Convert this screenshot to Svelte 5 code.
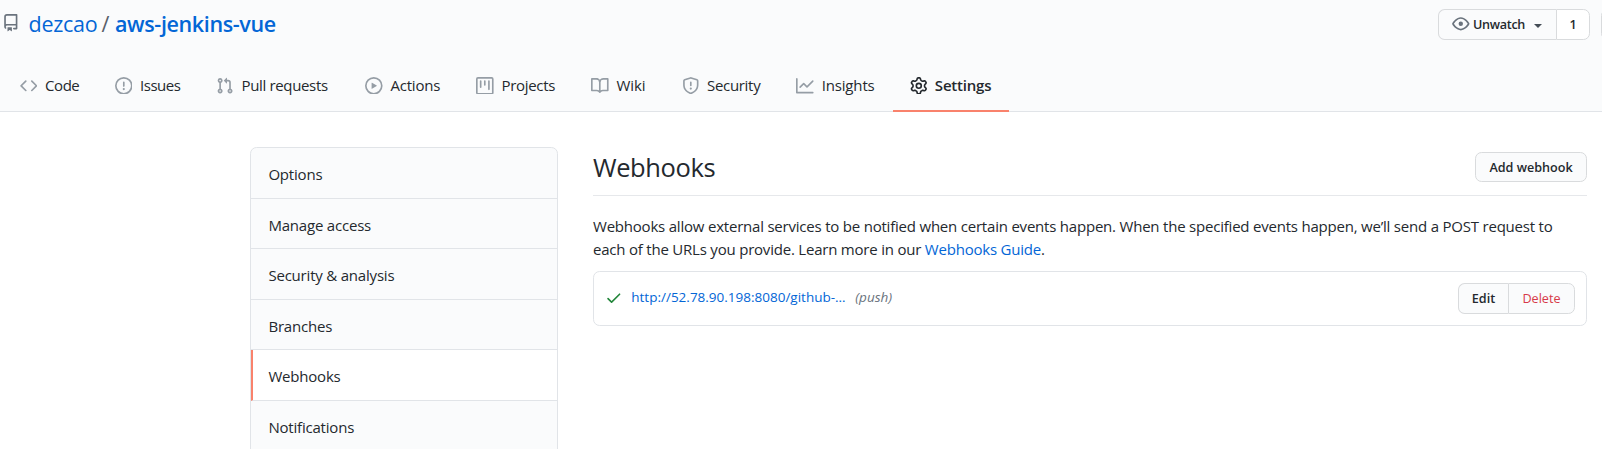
<script>
  const tabs = [
    { label: 'Code', icon: 'code', ls: -0.45 },
    { label: 'Issues', icon: 'issue', ls: -0.5 },
    { label: 'Pull requests', icon: 'pr', ls: -0.34 },
    { label: 'Actions', icon: 'play', ls: -0.2 },
    { label: 'Projects', icon: 'project', ls: -0.3 },
    { label: 'Wiki', icon: 'book', ls: -0.1 },
    { label: 'Security', icon: 'shield', ls: -0.3 },
    { label: 'Insights', icon: 'graph', ls: -0.15 },
    { label: 'Settings', icon: 'gear', ls: -0.2, active: true },
  ];
  const menu = ['Options', 'Manage access', 'Security & analysis', 'Branches', 'Webhooks', 'Notifications'];
  const paths = {
    repo: 'M2 2.5A2.5 2.5 0 014.5 0h8.75a.75.75 0 01.75.75v12.5a.75.75 0 01-.75.75h-2.5a.75.75 0 110-1.5h1.75v-2h-8a1 1 0 00-.714 1.7.75.75 0 01-1.072 1.05A2.495 2.495 0 012 11.5v-9zm10.5-1V9h-8c-.356 0-.694.074-1 .208V2.5a1 1 0 011-1h8zM5 12.25v3.25a.25.25 0 00.4.2l1.45-1.087a.25.25 0 01.3 0L8.6 15.7a.25.25 0 00.4-.2v-3.25a.25.25 0 00-.25-.25h-3.5a.25.25 0 00-.25.25z',
    code: 'M4.72 3.22a.75.75 0 011.06 1.06L2.06 8l3.72 3.72a.75.75 0 11-1.06 1.06L.47 8.53a.75.75 0 010-1.06l4.25-4.25zm6.56 0a.75.75 0 10-1.06 1.06L13.94 8l-3.72 3.72a.75.75 0 101.06 1.06l4.25-4.25a.75.75 0 000-1.06l-4.25-4.25z',
    issue: 'M8 1.5a6.5 6.5 0 100 13 6.5 6.5 0 000-13zM0 8a8 8 0 1116 0A8 8 0 010 8zm9 3a1 1 0 11-2 0 1 1 0 012 0zm-.25-6.25a.75.75 0 00-1.5 0v3.5a.75.75 0 001.5 0v-3.5z',
    pr: 'M7.177 3.073L9.573.677A.25.25 0 0110 .854v4.792a.25.25 0 01-.427.177L7.177 3.427a.25.25 0 010-.354zM3.75 2.5a.75.75 0 100 1.5.75.75 0 000-1.5zm-2.25.75a2.25 2.25 0 113 2.122v5.256a2.251 2.251 0 11-1.5 0V5.372A2.25 2.25 0 011.5 3.25zM11 2.5h-1V4h1a1 1 0 011 1v5.628a2.251 2.251 0 101.5 0V5A2.5 2.5 0 0011 2.5zm1 10.25a.75.75 0 111.5 0 .75.75 0 01-1.5 0zM3.75 12a.75.75 0 100 1.5.75.75 0 000-1.5z',
    play: 'M1.5 8a6.5 6.5 0 1113 0 6.5 6.5 0 01-13 0zM8 0a8 8 0 100 16A8 8 0 008 0zM6.379 5.227A.25.25 0 006 5.442v5.117a.25.25 0 00.379.214l4.264-2.559a.25.25 0 000-.428L6.379 5.227z',
    project: 'M1.75 0A1.75 1.75 0 000 1.75v12.5C0 15.216.784 16 1.75 16h12.5A1.75 1.75 0 0016 14.25V1.75A1.75 1.75 0 0014.25 0H1.75zM1.5 1.75a.25.25 0 01.25-.25h12.5a.25.25 0 01.25.25v12.5a.25.25 0 01-.25.25H1.75a.25.25 0 01-.25-.25V1.75zM11.75 3a.75.75 0 00-.75.75v7.5a.75.75 0 001.5 0v-7.5a.75.75 0 00-.75-.75zm-8.25.75a.75.75 0 011.5 0v5.5a.75.75 0 01-1.5 0v-5.5zM8 3a.75.75 0 00-.75.75v3.5a.75.75 0 001.5 0v-3.5A.75.75 0 008 3z',
    book: 'M0 1.75A.75.75 0 01.75 1h4.253c1.227 0 2.317.59 3 1.501A3.744 3.744 0 0111.006 1h4.245a.75.75 0 01.75.75v10.5a.75.75 0 01-.75.75h-4.507a2.25 2.25 0 00-1.591.659l-.622.621a.75.75 0 01-1.06 0l-.622-.621A2.25 2.25 0 005.258 13H.75a.75.75 0 01-.75-.75V1.75zm8.755 3a2.25 2.25 0 012.25-2.25H14.5v9h-3.757c-.71 0-1.4.201-1.992.572l.004-7.322zm-1.504 7.324l.004-5.073-.002-2.253A2.25 2.25 0 005.003 2.5H1.5v9h3.757a3.75 3.75 0 011.994.574z',
    shield: 'M7.467.133a1.75 1.75 0 011.066 0l5.25 1.68A1.75 1.75 0 0115 3.48V7c0 1.566-.32 3.182-1.303 4.682-.983 1.498-2.585 2.813-5.032 3.855a1.7 1.7 0 01-1.33 0c-2.447-1.042-4.049-2.357-5.032-3.855C1.32 10.182 1 8.566 1 7V3.48a1.75 1.75 0 011.217-1.667l5.25-1.68zm.61 1.429a.25.25 0 00-.153 0l-5.25 1.68a.25.25 0 00-.174.238V7c0 1.358.275 2.666 1.057 3.86.784 1.194 2.121 2.34 4.366 3.297a.2.2 0 00.154 0c2.245-.956 3.582-2.104 4.366-3.298C13.225 9.666 13.5 8.36 13.5 7V3.48a.25.25 0 00-.174-.237l-5.25-1.68zM9 10.5a1 1 0 11-2 0 1 1 0 012 0zm-.25-5.75a.75.75 0 10-1.5 0v3a.75.75 0 001.5 0v-3z',
    graph: 'M1.5 1.75a.75.75 0 00-1.5 0v12.5c0 .414.336.75.75.75h14.5a.75.75 0 000-1.5H1.5V1.75zm14.28 2.53a.75.75 0 00-1.06-1.06L10 7.94 7.53 5.47a.75.75 0 00-1.06 0L3.22 8.72a.75.75 0 001.06 1.06L7 7.06l2.47 2.47a.75.75 0 001.06 0l5.25-5.25z',
    gear: 'M7.429 1.525a6.593 6.593 0 011.142 0c.036.003.108.036.137.146l.289 1.105c.147.56.55.967.997 1.189.174.086.341.183.501.29.417.278.97.423 1.53.27l1.102-.303c.11-.03.175.016.195.046.219.31.41.641.573.989.014.031.022.11-.059.19l-.815.806c-.411.406-.562.957-.53 1.456a4.588 4.588 0 010 .582c-.032.499.119 1.05.53 1.456l.815.806c.08.08.073.159.059.19a6.494 6.494 0 01-.573.99c-.02.029-.086.074-.195.045l-1.103-.303c-.559-.153-1.112-.008-1.529.27-.16.107-.327.204-.5.29-.449.222-.851.628-.998 1.189l-.289 1.105c-.029.11-.101.143-.137.146a6.613 6.613 0 01-1.142 0c-.036-.003-.108-.037-.137-.146l-.289-1.105c-.147-.56-.55-.967-.997-1.189a4.502 4.502 0 01-.501-.29c-.417-.278-.97-.423-1.53-.27l-1.102.303c-.11.03-.175-.016-.195-.046a6.492 6.492 0 01-.573-.989c-.014-.031-.022-.11.059-.19l.815-.806c.411-.406.562-.957.53-1.456a4.587 4.587 0 010-.582c.032-.499-.119-1.05-.53-1.456l-.815-.806c-.08-.08-.073-.159-.059-.19a6.44 6.44 0 01.573-.99c.02-.029.086-.075.195-.045l1.103.303c.559.153 1.112.008 1.529-.27.16-.107.327-.204.5-.29.449-.222.851-.628.998-1.189l.289-1.105c.029-.11.101-.143.137-.146zM8 0c-.236 0-.47.01-.701.03-.743.065-1.29.615-1.458 1.261l-.29 1.106c-.017.066-.078.158-.211.224a5.994 5.994 0 00-.668.386c-.123.082-.233.09-.3.071L3.27 2.776c-.644-.177-1.392.02-1.82.63a7.977 7.977 0 00-.704 1.217c-.315.675-.111 1.422.363 1.891l.815.806c.05.048.098.147.088.294a6.084 6.084 0 000 .772c.01.147-.038.246-.088.294l-.815.806c-.474.469-.678 1.216-.363 1.891.2.428.436.835.704 1.218.428.609 1.176.806 1.82.63l1.103-.303c.066-.019.176-.011.299.071.213.143.436.272.668.386.133.066.194.158.212.224l.289 1.106c.169.646.715 1.196 1.458 1.26a8.094 8.094 0 001.402 0c.743-.064 1.29-.614 1.458-1.26l.29-1.106c.017-.066.078-.158.211-.224a5.98 5.98 0 00.668-.386c.123-.082.233-.09.3-.071l1.102.302c.644.177 1.392-.02 1.82-.63.268-.382.505-.789.704-1.217.315-.675.111-1.422-.364-1.891l-.814-.806c-.05-.048-.098-.147-.088-.294a6.1 6.1 0 000-.772c-.01-.147.039-.246.088-.294l.814-.806c.475-.469.679-1.216.364-1.891a7.992 7.992 0 00-.704-1.218c-.428-.609-1.176-.806-1.82-.63l-1.103.303c-.066.019-.176.011-.299-.071a5.991 5.991 0 00-.668-.386c-.133-.066-.194-.158-.212-.224L10.16 1.29C9.99.645 9.444.095 8.701.031A8.094 8.094 0 008 0zm1.5 8a1.5 1.5 0 11-3 0 1.5 1.5 0 013 0zM11 8a3 3 0 11-6 0 3 3 0 016 0z',
    eye: 'M1.679 7.932c.412-.621 1.242-1.75 2.366-2.717C5.175 4.242 6.527 3.5 8 3.5c1.473 0 2.824.742 3.955 1.715 1.124.967 1.954 2.096 2.366 2.717a.119.119 0 010 .136c-.412.621-1.242 1.75-2.366 2.717C10.825 11.758 9.473 12.5 8 12.5c-1.473 0-2.824-.742-3.955-1.715C2.92 9.818 2.09 8.69 1.679 8.068a.119.119 0 010-.136zM8 2c-1.981 0-3.67.992-4.933 2.078C1.797 5.169.88 6.423.43 7.1a1.619 1.619 0 000 1.798c.45.678 1.367 1.932 2.637 3.024C4.329 13.008 6.019 14 8 14c1.981 0 3.67-.992 4.933-2.078 1.27-1.091 2.187-2.345 2.637-3.023a1.619 1.619 0 000-1.798c-.45-.678-1.367-1.932-2.637-3.023C11.671 2.992 9.981 2 8 2zm0 8a2 2 0 100-4 2 2 0 000 4z',
    check: 'M13.78 4.22a.75.75 0 010 1.06l-7.25 7.25a.75.75 0 01-1.06 0L2.22 9.28a.75.75 0 011.06-1.06L6 10.94l6.72-6.72a.75.75 0 011.06 0z',
  };
</script>

{#snippet icon(name)}
  <svg class="icon" viewBox="0 0 16 16" aria-hidden="true"><path fill-rule="evenodd" d={paths[name]} /></svg>
{/snippet}

<div class="page">
  <header>
    <div class="top">
      <h1>
        {@render icon('repo')}
        <a class="owner" href="#owner">dezcao</a><span class="slash">/</span><a class="repo" href="#repo">aws-jenkins-vue</a>
      </h1>
      <div class="actions">
        <div class="group watch">
          <button class="btn">{@render icon('eye')}<span>Unwatch</span><i class="caret"></i></button>
          <a class="btn count" href="#watchers">1</a>
        </div>
        <button class="btn next" aria-label="Star"></button>
      </div>
    </div>
    <nav class="tabs">
      {#each tabs as t}
        <a href="#{t.icon}" class:active={t.active}>
          {@render icon(t.icon)}<span style:letter-spacing="{t.ls}px">{t.label}</span>
        </a>
      {/each}
    </nav>
  </header>

  <div class="content">
    <nav class="menu">
      {#each menu as m}
        <a href="#menu" class:current={m === 'Webhooks'}>{m}</a>
      {/each}
    </nav>
    <main>
      <div class="subhead">
        <h2>Webhooks</h2>
        <button class="btn add">Add webhook</button>
      </div>
      <p>
        Webhooks allow external services to be notified when certain events happen. When the specified events happen, we’ll send a POST request to
        <br />
        each of the URLs you provide. Learn more in our <a href="#guide">Webhooks Guide</a>.
      </p>
      <div class="hook">
        {@render icon('check')}
        <a class="url" href="#hook">http://52.78.90.198:8080/github-…</a>
        <em>(push)</em>
        <div class="group edit">
          <button class="btn">Edit</button>
          <button class="btn danger">Delete</button>
        </div>
      </div>
    </main>
  </div>
</div>

<style>
  :global(body) { margin: 0; background: #fff; overflow: hidden; }
  .page {
    height: 449px;
    overflow: hidden;
    font: 15px/23px "Open Sans", "Noto Sans", sans-serif;
    color: #24292e;
  }
  .page * { box-sizing: border-box; }
  a { color: #0366d6; text-decoration: none; }
  .icon { width: 17.6px; height: 17.6px; flex: none; fill: currentColor; display: block; }

  header { height: 112px; background: #fafbfc; border-bottom: 1px solid #e1e4e8; }
  .top { display: flex; justify-content: space-between; height: 61px; padding-top: 9px; }
  h1 {
    display: flex; align-items: flex-start; margin: 0; padding-left: 2px;
    font-size: 21.5px; font-weight: 400; line-height: 30px;
  }
  h1 .icon { color: #6a737d; margin: 5px 8.9px 0 0; }
  .slash { width: 19px; text-align: center; color: #586069; }
  .owner { width: 67.5px; letter-spacing: -0.25px; }
  .repo { font-weight: 600; letter-spacing: -0.37px; }

  .actions { display: flex; gap: 11px; width: 164px; }
  .btn {
    display: flex; align-items: center; justify-content: center;
    font: 600 12.6px/20px "Open Sans", "Noto Sans", sans-serif;
    color: #24292e; background: #fafbfc;
    border: 1px solid #d9dbdd; border-radius: 6.6px; padding: 0; margin: 0;
    white-space: nowrap;
  }
  .group { display: flex; flex: none; }
  .group .btn:first-child { border-radius: 6.6px 0 0 6.6px; border-right: 0; }
  .group .btn:last-child { border-radius: 0 6.6px 6.6px 0; }
  .watch .btn { width: 118px; height: 31px; justify-content: flex-start; padding-left: 13px; }
  .watch .icon { color: #6a737d; margin: -1px 3.4px 0 0; }
  .watch span { width: 61px; text-align: left; letter-spacing: -0.3px; }
  .watch .count { width: 34px; background: #fff; padding: 0; justify-content: center; }
  .caret { border: 4.4px solid transparent; border-top-color: #444d56; border-bottom: 0; margin-top: 2px; }
  .next { width: 100px; height: 31px; flex: none; }

  .tabs {
    display: grid; height: 51px; padding-left: 2.2px;
    grid-template-columns: 95px 101.4px 149px 111px 115px 90.5px 114.7px 114px 116px;
  }
  .tabs a {
    display: flex; align-items: center; height: 51px; padding-left: 17.6px; color: #24292e;
    white-space: nowrap; border-bottom: 2px solid transparent;
  }
  .tabs .icon { color: #959da5; margin: 0 7.7px 0 0; }
  .tabs .active { font-weight: 600; border-bottom-color: #f9826c; }
  .tabs .active .icon { color: #24292e; margin-right: 6.9px; }

  .content { display: flex; padding: 35px 15px 0 250px; }
  .menu {
    width: 308px; height: 340px; flex: none; margin-right: 35px;
    border: 1px solid #e1e4e8; border-radius: 6.6px; background: #fafbfc; overflow: hidden;
  }
  .menu a {
    display: block; height: 50.4px; padding: 15px 17.4px 0; color: #24292e;
    border-bottom: 1px solid #e1e4e8; letter-spacing: -0.2px;
  }
  .menu a:first-child { height: 51px; }
  .menu .current { background: #fff; border-left: 2px solid #f9826c; padding-left: 15.4px; }

  main { flex: 1; }
  .subhead { display: flex; justify-content: space-between; height: 49px; border-bottom: 1px solid #e6e8eb; }
  h2 { margin: 0; font-size: 25.5px; line-height: 41px; font-weight: 400; letter-spacing: -0.38px; }
  .add { width: 112px; height: 30px; margin-top: 5px; padding-top: 1px; }
  p { margin: 19px 0 10px; height: 46px; white-space: nowrap; letter-spacing: -0.21px; }
  .hook {
    display: flex; align-items: center; height: 55px; padding: 0 11px 0 11px;
    border: 1px solid #e1e4e8; border-radius: 6.6px; font-size: 13.5px;
  }
  .hook .icon { color: #22863a; margin: -1px 8.7px 0 0; }
  .url { width: 224px; white-space: nowrap; padding-bottom: 2px; }
  em { color: #6a737d; padding-bottom: 2px; }
  .edit { margin-left: auto; }
  .edit .btn { height: 31px; width: 50px; }
  .edit .danger { width: 67px; color: #d73a49; font-weight: 500; }
</style>
